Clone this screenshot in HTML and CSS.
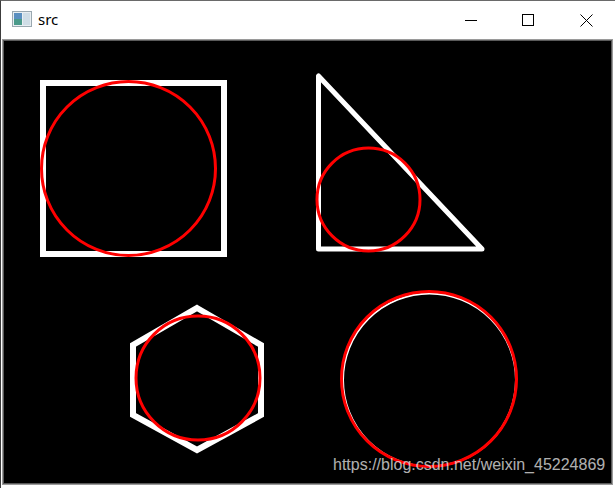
FILE: index.html
```html
<!DOCTYPE html>
<html>
<head>
<meta charset="utf-8">
<link rel="stylesheet" href="styles.css">
</head>
<body>
<div class="window">
  <div class="titlebar">
    <svg class="appicon" width="20" height="16" viewBox="0 0 20 16">
      <rect x="0.5" y="0.5" width="19" height="15" fill="#e8eef2" stroke="#9aa8b0"/>
      <rect x="2" y="2" width="8" height="12" fill="#4a9a8a"/>
      <rect x="2" y="2" width="8" height="6" fill="#5a8fc0"/>
      <rect x="11" y="2" width="7" height="12" fill="#cfdde6"/>
    </svg>
    <span class="title">src</span>
    <div class="controls">
      <div class="ctl"><svg width="12" height="12" viewBox="0 0 12 12"><line x1="0" y1="6.5" x2="12" y2="6.5" stroke="#000" stroke-width="1"/></svg></div>
      <div class="ctl"><svg width="12" height="12" viewBox="0 0 12 12"><rect x="0.5" y="0.5" width="11" height="11" fill="none" stroke="#000" stroke-width="1"/></svg></div>
      <div class="ctl"><svg width="13" height="13" viewBox="0 0 13 13"><path d="M0.5 0.5 L12.5 12.5 M12.5 0.5 L0.5 12.5" stroke="#000" stroke-width="1"/></svg></div>
    </div>
  </div>
  <div class="canvas">
    <svg class="drawing" width="609" height="444" viewBox="4 41 609 444">
      <rect x="4" y="41" width="609" height="444" fill="#000"/>
      <rect x="44" y="84" width="181" height="171" fill="none" stroke="#fff" stroke-width="6"/>
      <circle cx="129.5" cy="169.5" r="87" fill="none" stroke="#f00" stroke-width="3"/>
      <path d="M319.5 77 L319.5 250 L483 250 Z" fill="none" stroke="#fff" stroke-width="5" stroke-linejoin="round"/>
      <circle cx="369.5" cy="200.5" r="51.5" fill="none" stroke="#f00" stroke-width="3"/>
      <polygon points="198,309 262,346 262,416 198,451 134,416 134,346" fill="none" stroke="#fff" stroke-width="6"/>
      <circle cx="199" cy="379" r="62" fill="none" stroke="#f00" stroke-width="3"/>
      <circle cx="430.5" cy="381" r="86.5" fill="none" stroke="#fff" stroke-width="2"/>
      <circle cx="430" cy="380" r="87.5" fill="none" stroke="#f00" stroke-width="3"/>
    </svg>
    <div class="watermark">https://blog.csdn.net/weixin_45224869</div>
  </div>
</div>
</body>
</html>
```
FILE: styles.css
```css
html, body {
  margin: 0;
  padding: 0;
  background: #fff;
}
.window {
  width: 615px;
  height: 488px;
  box-sizing: border-box;
  border-left: 1px solid #3c3c3c;
  border-top: 1px solid #6a6a6a;
  display: flex;
  flex-direction: column;
  overflow: hidden;
}
.titlebar {
  height: 38px;
  display: flex;
  align-items: center;
  background: #fff;
  flex: none;
}
.appicon {
  margin-left: 11px;
  margin-right: 6px;
  margin-top: -2px;
}
.title {
  font-family: "Noto Sans", "Liberation Sans", sans-serif;
  font-size: 15px;
  color: #000;
  margin-top: -3px;
}
.controls {
  margin-left: auto;
  display: flex;
  height: 100%;
}
.ctl {
  width: 58px;
  display: flex;
  align-items: center;
  justify-content: center;
}
.ctl:first-child {
  width: 48px;
  margin-right: 4px;
}
.canvas {
  position: relative;
  margin-left: 1px;
  width: 609px;
  height: 444px;
  border: 1px solid #9a9a9a;
  outline: 1px solid #5a5a5a;
  outline-offset: -2px;
  background: #000;
}
.drawing {
  display: block;
}
.watermark {
  position: absolute;
  left: 330px;
  top: 416px;
  font-family: "Liberation Sans", Arial, sans-serif;
  font-size: 16px;
  color: rgba(225, 225, 225, 0.8);
  white-space: nowrap;
}
```
